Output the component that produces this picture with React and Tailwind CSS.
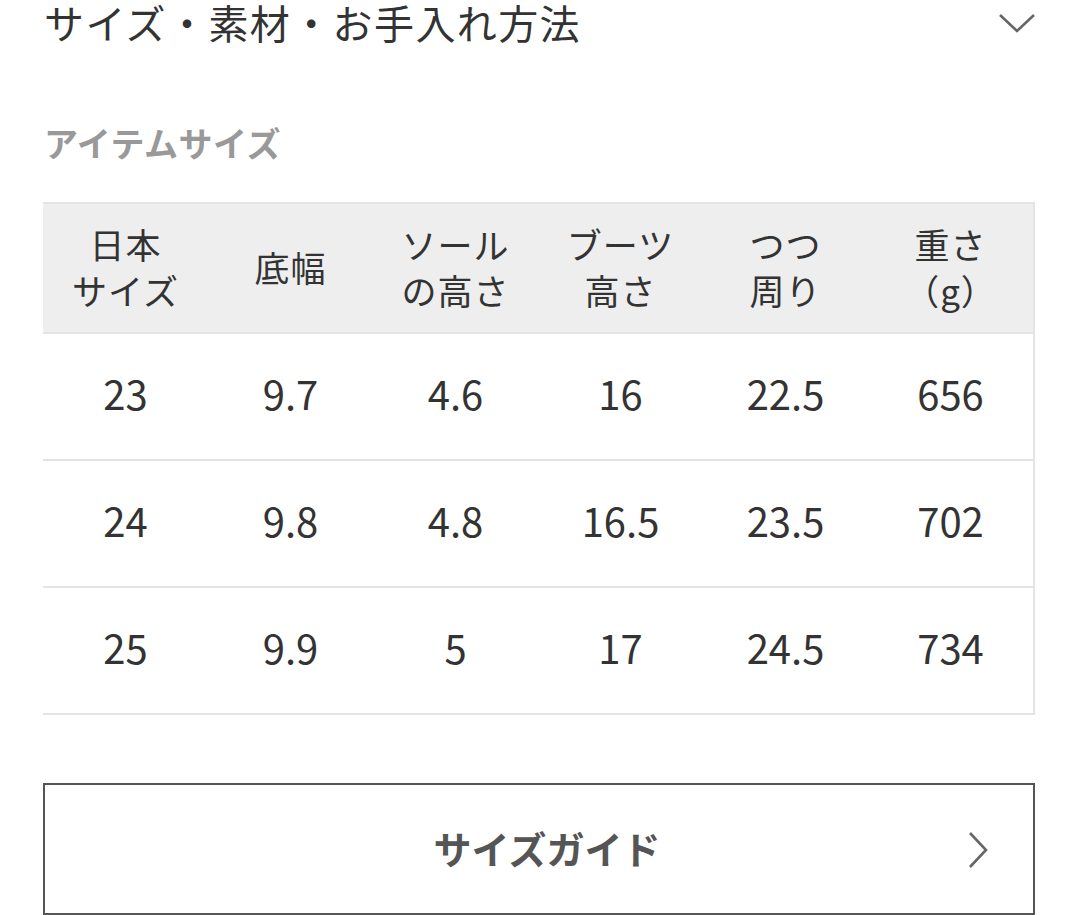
import React from "react";

const headers = [
  ["日本", "サイズ"],
  ["底幅"],
  ["ソール", "の高さ"],
  ["ブーツ", "高さ"],
  ["つつ", "周り"],
  ["重さ", "（g）"],
];

const rows = [
  ["23", "9.7", "4.6", "16", "22.5", "656"],
  ["24", "9.8", "4.8", "16.5", "23.5", "702"],
  ["25", "9.9", "5", "17", "24.5", "734"],
];

const font = { fontFamily: '"Noto Sans CJK JP", "Noto Sans", sans-serif' };

export default function App() {
  return (
    <div className="w-[1080px] h-[915px] bg-white overflow-hidden text-[#333]" style={font}>
      <div className="pl-[43px] w-[1035px]">
        <div className="flex items-center justify-between h-[44px]">
          <div className="text-[40px] leading-[44px] tracking-[1.4px] text-[#333] pl-[1px] whitespace-nowrap">
            サイズ・素材・お手入れ方法
          </div>
          <svg width="38" height="22" viewBox="0 0 38 22" className="mr-[-1px] mt-[2px]">
            <path d="M2 3 L19 19 L36 3" fill="none" stroke="#666" strokeWidth="2.6" />
          </svg>
        </div>

        <div className="mt-[76px] h-[44px] flex items-center text-[34px] tracking-[0.5px] font-bold text-[#999] pl-[1px]">
          アイテムサイズ
        </div>

        <div className="mt-[38px] border-r-2 border-[#e4e4e4]">
          <div className="grid grid-cols-6 h-[132px] bg-[#eeeeee] border-t-2 border-b-2 border-[#e4e4e4]">
            {headers.map((h, i) => (
              <div key={i} className="flex flex-col items-center justify-center pb-[3px] text-[35px] tracking-[1px] leading-[46px] text-[#333]">
                {h.map((l, j) => (
                  <div key={j}>{l}</div>
                ))}
              </div>
            ))}
          </div>
          {rows.map((r, i) => (
            <div key={i} className="grid grid-cols-6 h-[127px] border-b-2 border-[#e4e4e4]">
              {r.map((c, j) => (
                <div key={j} className="flex items-center justify-center pb-[8px] text-[40px] text-[#333]">
                  {c}
                </div>
              ))}
            </div>
          ))}
        </div>

        <div className="mt-[68px] h-[132px] border-2 border-[#555] flex items-center relative">
          <div className="flex-1 text-center pl-[16px] pb-[4px] text-[38px] font-bold text-[#555]">
            サイズガイド
          </div>
          <svg width="22" height="38" viewBox="0 0 22 38" className="absolute right-[44px] top-[46px]">
            <path d="M3 2 L19 19 L3 36" fill="none" stroke="#666" strokeWidth="2.6" />
          </svg>
        </div>
      </div>
    </div>
  );
}
